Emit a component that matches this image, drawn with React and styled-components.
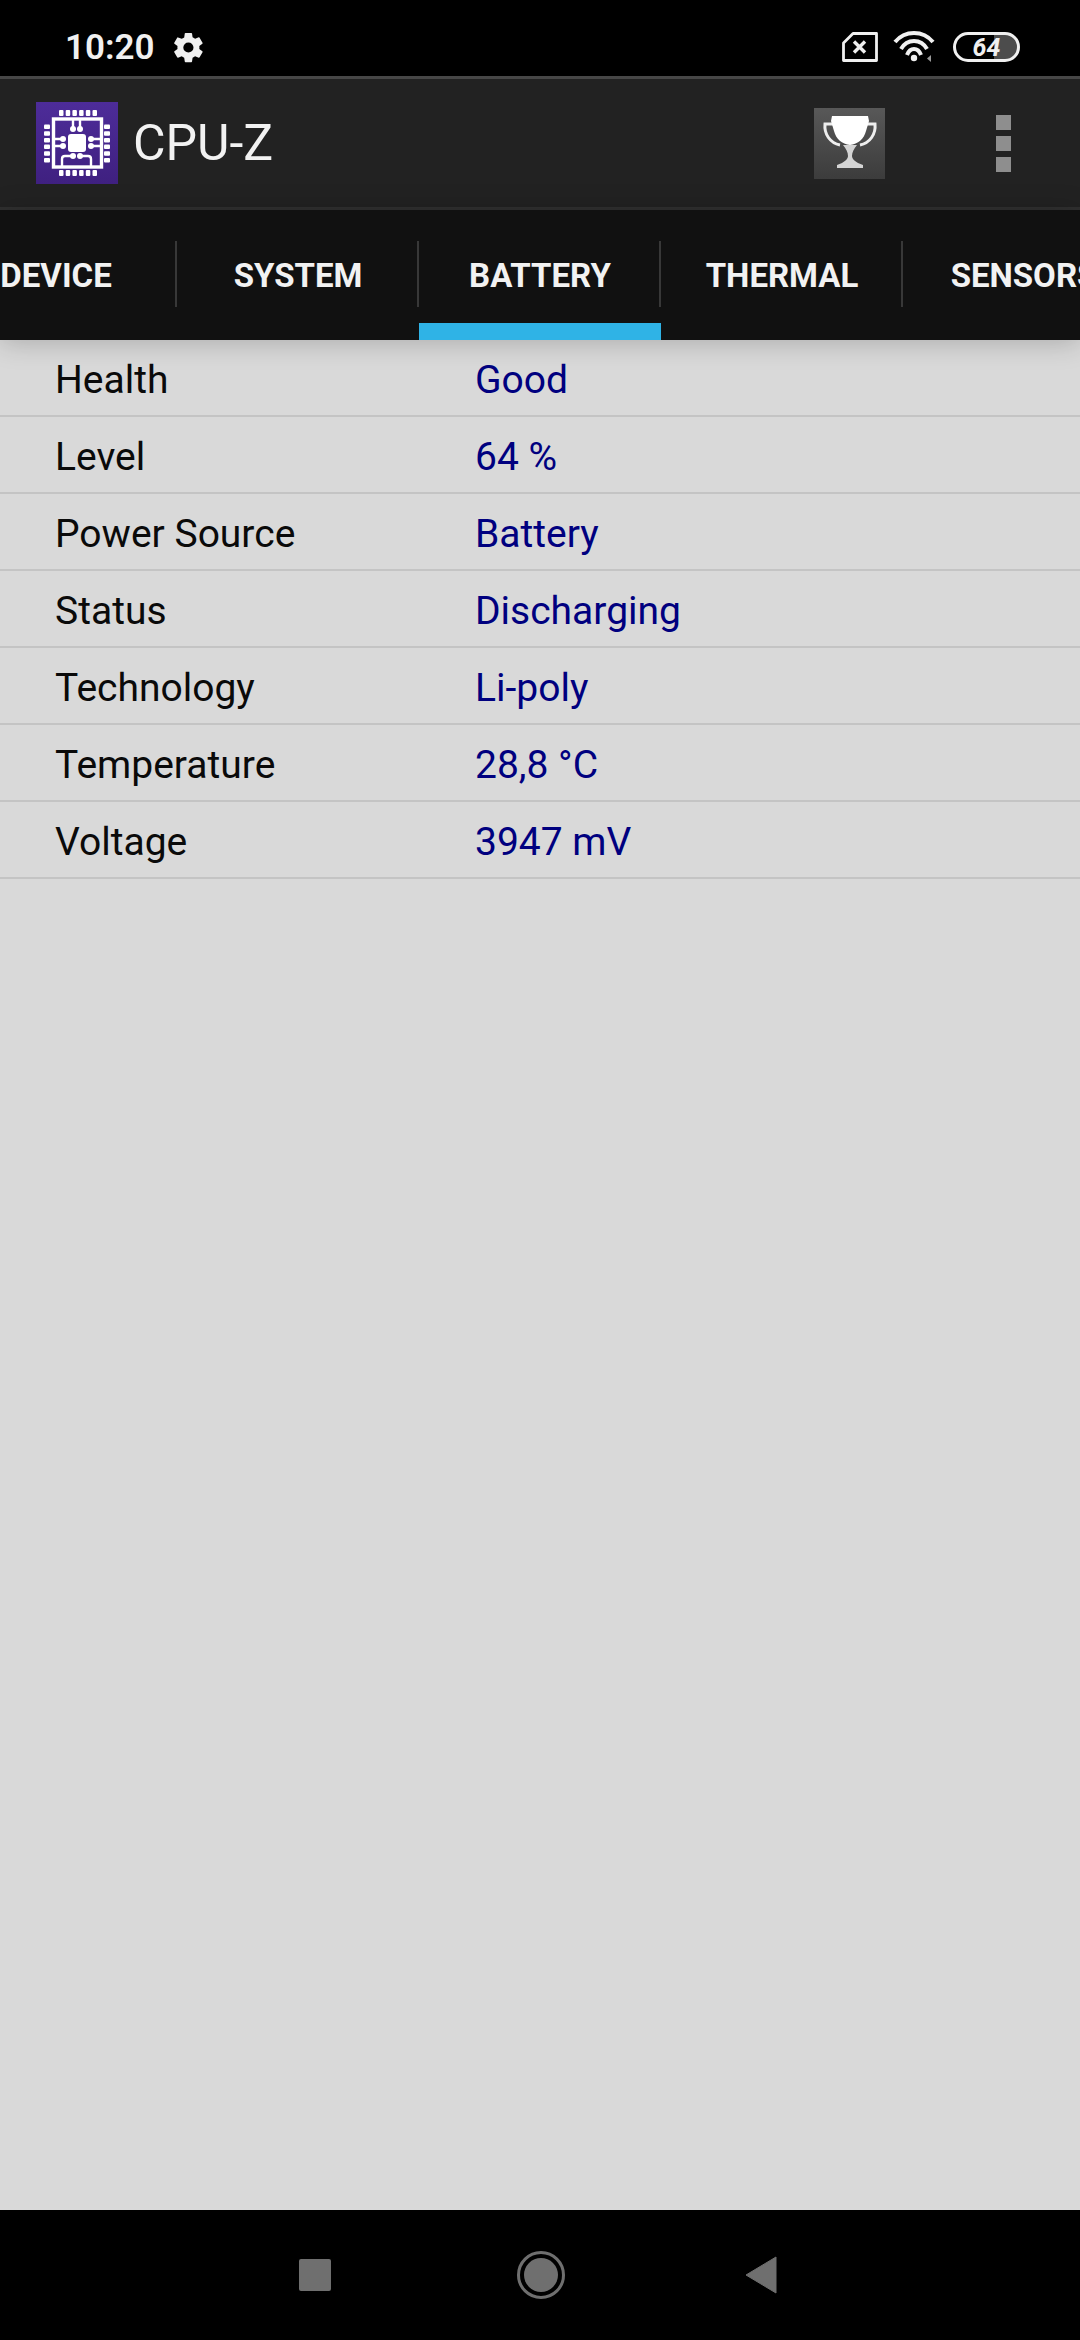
import React from "react";
import styled, { createGlobalStyle } from "styled-components";

const GlobalStyle = createGlobalStyle`
  html, body {
    margin: 0;
    padding: 0;
    background: #d9d9d9;
  }
  * {
    box-sizing: border-box;
  }
`;

const Screen = styled.div`
  width: 1080px;
  height: 2340px;
  display: flex;
  flex-direction: column;
  overflow: hidden;
  font-family: Roboto, "Liberation Sans", sans-serif;
  background: #d9d9d9;
`;

const StatusBar = styled.div`
  height: 76px;
  flex: none;
  background: #000;
  display: flex;
  align-items: center;
  padding: 18px 60px 0 65px;
  color: #f0f0f0;
`;

const Clock = styled.span`
  font-size: 35px;
  font-weight: 600;
  line-height: 1;
  margin-right: 16px;
`;

const StatusRight = styled.div`
  margin-left: auto;
  display: flex;
  align-items: center;
`;

const BatteryPill = styled.div`
  width: 67px;
  height: 30px;
  margin-left: 16px;
  border: 3px solid #f0f0f0;
  border-radius: 15px;
  background: linear-gradient(to right, transparent 0 62%, #4c4c4c 62% 100%);
  display: flex;
  align-items: center;
  justify-content: center;
  font-size: 25px;
  font-weight: 700;
  font-style: italic;
  line-height: 1;
`;

const Toolbar = styled.div`
  height: 134px;
  flex: none;
  background: #222;
  border-top: 3px solid #474747;
  border-bottom: 3px solid #303030;
  display: flex;
  align-items: center;
  padding: 0 69px 0 36px;
`;

const AppTitle = styled.span`
  margin-left: 15px;
  color: #f2f2f2;
  font-size: 50px;
  line-height: 1;
`;

const TrophyBox = styled.div`
  width: 71px;
  height: 71px;
  margin-left: auto;
  background: linear-gradient(#585858, #3c3c3c);
  display: flex;
  align-items: center;
  justify-content: center;
`;

const MenuDots = styled.div`
  margin-left: 111px;
  display: flex;
  flex-direction: column;
  gap: 6px;
`;

const Dot = styled.span`
  width: 15px;
  height: 15px;
  background: #8e8e8e;
`;

const TabBar = styled.div`
  height: 130px;
  flex: none;
  position: relative;
  z-index: 1;
  background: #111;
  display: flex;
  justify-content: center;
  overflow: hidden;
  box-shadow: 0 2px 26px rgba(0, 0, 0, 0.22);
`;

const Tab = styled.div`
  width: 242px;
  flex: none;
  position: relative;
  display: flex;
  align-items: center;
  justify-content: center;
  padding-top: 1px;
  color: #f2f2f2;
  font-size: 33px;
  font-weight: 700;
  ${props => props.active && "box-shadow: inset 0 -17px 0 #2fb3e6;"}

  &:not(:last-child)::after {
    content: "";
    position: absolute;
    right: 0;
    top: 31px;
    height: 66px;
    width: 2px;
    background: #383838;
  }
`;

const InfoList = styled.div`
  flex: 1;
  background: #d9d9d9;
`;

const Row = styled.div`
  height: 77px;
  display: flex;
  align-items: center;
  padding: 4px 0 0 55px;
  border-bottom: 2px solid #c4c4c4;
  font-size: 39px;
`;

const Label = styled.span`
  width: 420px;
  color: #0a0a0a;
`;

const Value = styled.span`
  color: #00007f;
`;

const NavBar = styled.div`
  height: 130px;
  flex: none;
  background: #000;
  display: flex;
  align-items: center;
  padding-left: 299px;
`;

const NavSquare = styled.div`
  width: 32px;
  height: 32px;
  border-radius: 2px;
  background: #6f6f6f;
`;

const NavHome = styled.div`
  width: 48px;
  height: 48px;
  margin-left: 186px;
  border: 3px solid #6f6f6f;
  border-radius: 50%;
  padding: 4px;

  &::before {
    content: "";
    display: block;
    width: 100%;
    height: 100%;
    border-radius: 50%;
    background: #6f6f6f;
  }
`;

const NavBack = styled.svg`
  margin-left: 180px;
  display: block;
`;

const WifiSvg = styled.svg`
  margin-left: 15px;
`;

const rows = [
  ["Health", "Good"],
  ["Level", "64 %"],
  ["Power Source", "Battery"],
  ["Status", "Discharging"],
  ["Technology", "Li-poly"],
  ["Temperature", "28,8 °C"],
  ["Voltage", "3947 mV"]
];

const tabs = ["DEVICE", "SYSTEM", "BATTERY", "THERMAL", "SENSORS"];

const GearIcon = () => (
  <svg width="35" height="35" viewBox="0 0 24 24" fill="#f0f0f0">
    <path
      fillRule="evenodd"
      d="M19.4 13c.04-.33.06-.66.06-1s-.02-.67-.06-1l2.1-1.65a.5.5 0 0 0 .12-.64l-2-3.46a.5.5 0 0 0-.6-.22l-2.49 1a7.3 7.3 0 0 0-1.73-1l-.38-2.65A.49.49 0 0 0 13.93 2h-4a.49.49 0 0 0-.49.42l-.38 2.65a7.7 7.7 0 0 0-1.73 1l-2.49-1a.49.49 0 0 0-.6.22l-2 3.46a.49.49 0 0 0 .12.64L4.47 11c-.04.33-.07.67-.07 1s.03.67.07 1l-2.11 1.65a.5.5 0 0 0-.12.64l2 3.46c.12.22.39.3.6.22l2.49-1c.52.4 1.08.73 1.73 1l.38 2.65c.04.24.25.42.49.42h4c.24 0 .45-.18.49-.42l.38-2.65a7.7 7.7 0 0 0 1.73-1l2.49 1c.22.08.48 0 .6-.22l2-3.46a.5.5 0 0 0-.12-.64L19.4 13zM11.93 15.5a3.5 3.5 0 1 1 0-7 3.5 3.5 0 0 1 0 7z"
    />
  </svg>
);

const SimIcon = () => (
  <svg width="36" height="30" viewBox="0 0 36 30" fill="none" stroke="#f0f0f0">
    <path d="M11 1.5h23.5v27H1.5V11z" strokeWidth="2.8" strokeLinejoin="round" />
    <path d="M12 9.500l11 11M23 9.500l-11 11" strokeWidth="3.4" />
  </svg>
);

const WifiIcon = () => (
  <WifiSvg width="44" height="32" viewBox="0 0 44 32" fill="none" stroke="#f0f0f0">
    <path d="M2 11C12-1 30-1 40 11" strokeWidth="4" />
    <path d="M8 18C14 7.300 28 7.300 34 18" strokeWidth="4" />
    <path d="M14 24C17 16 25 16 28 24" strokeWidth="4" />
    <circle cx="21" cy="27" r="3.200" fill="#f0f0f0" stroke="none" />
    <path d="M38 24v7l-4-3.500z" fill="#9a9a9a" stroke="none" />
  </WifiSvg>
);

const CpuLogo = () => (
  <svg width="82" height="82" viewBox="0 0 82 82">
    <defs>
      <linearGradient id="logoBg" x1="0" y1="0" x2="0" y2="1">
        <stop offset="0" stopColor="#4d2c99" />
        <stop offset="1" stopColor="#3f2080" />
      </linearGradient>
    </defs>
    <rect width="82" height="82" fill="url(#logoBg)" />
    <rect x="17.500" y="17" width="48" height="48" fill="none" stroke="#fff" strokeWidth="3.400" />
    <rect x="32" y="32" width="18" height="18" rx="3" fill="#fff" />
    {[0, 1, 2, 3, 4, 5].map(i => (
      <g key={i} fill="#fff">
        <rect x={23 + i * 6.7} y="8" width="4.500" height="6" rx="1" />
        <rect x={23 + i * 6.7} y="68" width="4.500" height="6" rx="1" />
        <rect x="8" y={22.500 + i * 6.7} width="6" height="4.500" rx="1" />
        <rect x="68" y={22.500 + i * 6.7} width="6" height="4.500" rx="1" />
      </g>
    ))}
    <g fill="none" stroke="#fff" strokeWidth="2.400">
      <path d="M37 17v10M44 17v10M17 37h10M17 44h10M55 37h10M55 44h10" />
      <path d="M26 65v-8q0-3 3-3h8M44 54h8q3 0 3 3v8" />
    </g>
    <g fill="#fff">
      <circle cx="37" cy="27" r="3" />
      <circle cx="44" cy="27" r="3" />
      <circle cx="27" cy="37" r="3" />
      <circle cx="27" cy="44" r="3" />
      <circle cx="55" cy="37" r="3" />
      <circle cx="55" cy="44" r="3" />
      <circle cx="37" cy="54" r="3" />
      <circle cx="44" cy="54" r="3" />
    </g>
  </svg>
);

const TrophyIcon = () => (
  <svg width="56" height="56" viewBox="0 0 56 56">
    <path
      d="M11 9H3c-1 10 5 19 15 21M45 9h8c1 10-5 19-15 21"
      stroke="#eee"
      strokeWidth="3"
      fill="none"
    />
    <path d="M10 1h36l1 5-3 10c-2 8-8 13-16 14-8-1-14-6-16-14L9 6z" fill="#fff" />
    <path d="M21 30h14c-3 4-5 7-5 11 0 3 3 5 6 7l5 2v3H15v-3l5-2c3-2 6-4 6-7 0-4-2-7-5-11z" fill="#d4d4d4" />
  </svg>
);

const App = () => (
  <Screen>
    <GlobalStyle />
    <StatusBar>
      <Clock>10:20</Clock>
      <GearIcon />
      <StatusRight>
        <SimIcon />
        <WifiIcon />
        <BatteryPill>64</BatteryPill>
      </StatusRight>
    </StatusBar>
    <Toolbar>
      <CpuLogo />
      <AppTitle>CPU-Z</AppTitle>
      <TrophyBox>
        <TrophyIcon />
      </TrophyBox>
      <MenuDots>
        <Dot />
        <Dot />
        <Dot />
      </MenuDots>
    </Toolbar>
    <TabBar>
      {tabs.map(tab => (
        <Tab key={tab} active={tab === "BATTERY"}>
          {tab}
        </Tab>
      ))}
    </TabBar>
    <InfoList>
      {rows.map(([label, value]) => (
        <Row key={label}>
          <Label>{label}</Label>
          <Value>{value}</Value>
        </Row>
      ))}
    </InfoList>
    <NavBar>
      <NavSquare />
      <NavHome />
      <NavBack width="32" height="38" viewBox="0 0 32 38">
        <path d="M31 1v36L1 19z" fill="#6f6f6f" stroke="#6f6f6f" strokeLinejoin="round" />
      </NavBack>
    </NavBar>
  </Screen>
);

export default App;
